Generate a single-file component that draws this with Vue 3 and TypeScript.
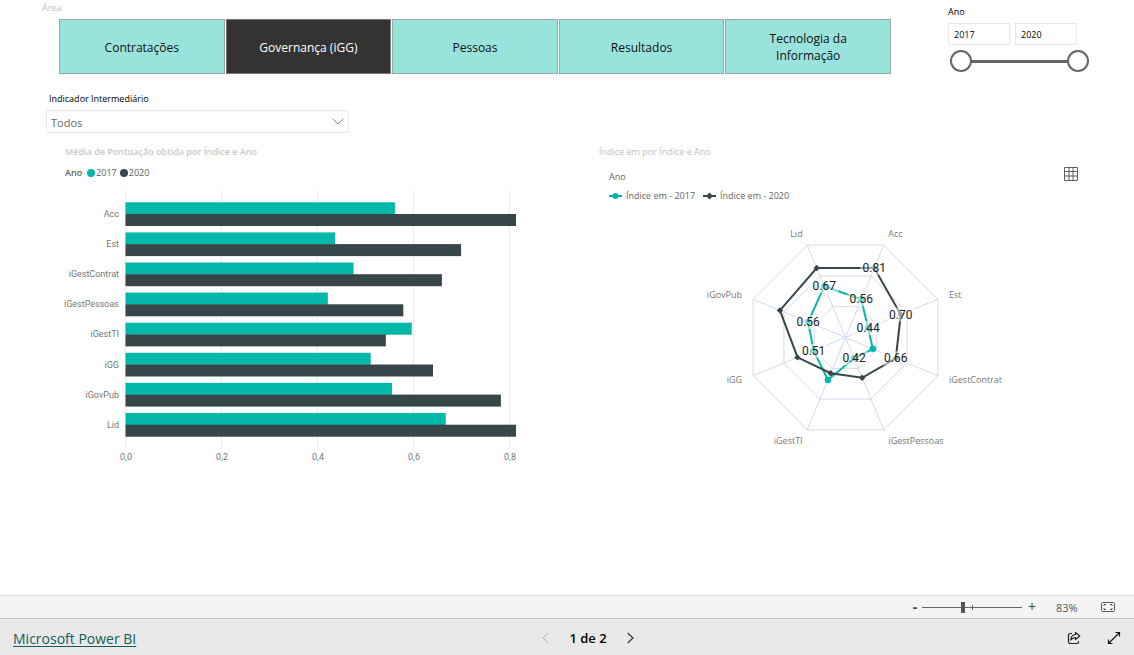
<script setup lang="ts">
import { computed, ref } from 'vue'

interface Indicator {
  name: string
  y2017: number
  y2020: number
}

interface ValueLabel {
  x: number
  y: number
  text: string
}

const areas = ['Contratações', 'Governança (iGG)', 'Pessoas', 'Resultados', 'Tecnologia da Informação']
const selectedArea = ref('Governança (iGG)')
const indicator = ref('Todos')
const yearFrom = ref(2017)
const yearTo = ref(2020)
const zoomLevel = ref(83)

const rows: Indicator[] = [
  { name: 'Acc', y2017: 0.562, y2020: 0.8146 },
  { name: 'Est', y2017: 0.437, y2020: 0.7 },
  { name: 'iGestContrat', y2017: 0.4756, y2020: 0.66 },
  { name: 'iGestPessoas', y2017: 0.422, y2020: 0.5795 },
  { name: 'iGestTI', y2017: 0.597, y2020: 0.543 },
  { name: 'iGG', y2017: 0.5115, y2020: 0.6415 },
  { name: 'iGovPub', y2017: 0.556, y2020: 0.783 },
  { name: 'Lid', y2017: 0.668, y2020: 0.8146 },
]

/* Bar chart scales */
const unit = 479.4
const band = 30.1
const ticks = [0, 0.2, 0.4, 0.6, 0.8].map((v) => ({
  x: Math.round(v * unit),
  label: v.toFixed(1).replace('.', ','),
}))

/* Radar scales */
const radius = 100
const minValue = 0.255
const span = 0.744

function polar(index: number, r: number): [number, number] {
  const angle = ((22.5 + index * 45) * Math.PI) / 180
  return [Math.sin(angle) * r, -Math.cos(angle) * r]
}

function toPoints(list: [number, number][]): string {
  return list.map(([x, y]) => `${x.toFixed(2)},${y.toFixed(2)}`).join(' ')
}

function valuePoint(index: number, value: number): [number, number] {
  return polar(index, ((value - minValue) / span) * radius)
}

const rings = [1 / 3, 2 / 3, 1].map((k) => toPoints(rows.map((_, i) => polar(i, radius * k))))
const spokes = rows.map((_, i) => polar(i, radius))
const points2017 = rows.map((r, i) => valuePoint(i, r.y2017))
const points2020 = rows.map((r, i) => valuePoint(i, r.y2020))

const labelled2017 = [0, 1, 3, 5, 6, 7]
const labelled2020 = [0, 1, 2]
const valueLabels = computed<ValueLabel[]>(() => [
  ...labelled2017.map((i) => ({ x: points2017[i][0], y: points2017[i][1], text: rows[i].y2017.toFixed(2) })),
  ...labelled2020.map((i) => ({ x: points2020[i][0], y: points2020[i][1], text: rows[i].y2020.toFixed(2) })),
])

const axisLabels = rows.map((r, i) => {
  const [x, y] = polar(i, 112)
  return { name: r.name, x, y: y + 3, anchor: x > 0 ? 'start' : 'end' }
})
</script>

<template>
  <div class="page">
    <main class="report">
      <header class="filters">
        <section class="area">
          <h2 class="area-title">Área</h2>
          <div class="tiles">
            <button
              v-for="area in areas"
              :key="area"
              type="button"
              class="tile"
              :class="{ selected: area === selectedArea }"
              :aria-pressed="area === selectedArea"
              @click="selectedArea = area"
            >
              {{ area }}
            </button>
          </div>
        </section>
        <section class="years" aria-labelledby="years-title">
          <h2 id="years-title" class="slicer-title">Ano</h2>
          <div class="year-inputs">
            <input v-model.number="yearFrom" type="text" aria-label="Ano inicial" />
            <input v-model.number="yearTo" type="text" aria-label="Ano final" />
          </div>
          <div class="year-range">
            <input v-model.number="yearFrom" type="range" min="2017" max="2020" aria-label="Início do intervalo" />
            <input v-model.number="yearTo" type="range" min="2017" max="2020" aria-label="Fim do intervalo" />
          </div>
        </section>
      </header>

      <section class="indicator">
        <label class="slicer-title" for="indicator">Indicador Intermediário</label>
        <div class="dropdown">
          <select id="indicator" v-model="indicator">
            <option>Todos</option>
            <option v-for="r in rows" :key="r.name">{{ r.name }}</option>
          </select>
          <svg width="12" height="7" viewBox="0 0 12 7" aria-hidden="true">
            <path d="M.7.7 6 6 11.3.7" fill="none" stroke="#888" />
          </svg>
        </div>
      </section>

      <div class="charts">
        <section class="chart bars">
          <h2 class="chart-title strong">Média de Pontuação obtida por Índice e Ano</h2>
          <div class="legend">
            <strong>Ano</strong>
            <span><i class="dot teal"></i>2017</span>
            <span><i class="dot dark"></i>2020</span>
          </div>
          <svg class="bar-svg" viewBox="0 0 460 280" role="img" aria-label="Média de pontuação por índice e ano">
            <g transform="translate(61 0)">
              <g v-for="t in ticks" :key="t.label">
                <line :x1="t.x - 0.5" :x2="t.x - 0.5" y1="4" y2="262" class="grid" />
                <text :x="t.x" y="274" text-anchor="middle" class="axis narrow">{{ t.label }}</text>
              </g>
              <g v-for="(r, i) in rows" :key="r.name" :transform="`translate(0 ${16 + i * band})`">
                <text x="-7" y="15" text-anchor="end" class="axis narrow">{{ r.name }}</text>
                <rect x="-0.5" y="0.3" height="12" :width="r.y2017 * unit" fill="#01b8aa" />
                <rect x="-0.5" y="12" height="12" :width="r.y2020 * unit" fill="#374649" />
              </g>
            </g>
          </svg>
        </section>

        <section class="chart radar">
          <h2 class="chart-title">Índice em por Índice e Ano</h2>
          <div class="radar-head">
            <div class="radar-legend">
              <span>Ano</span>
              <div class="series">
                <span>
                  <svg width="13" height="8" viewBox="0 0 13 8" aria-hidden="true">
                    <path d="M0 4h13" stroke="#01b8aa" stroke-width="2" />
                    <circle cx="6.5" cy="4" r="3" fill="#01b8aa" />
                  </svg>
                  Índice em - 2017
                </span>
                <span>
                  <svg width="13" height="8" viewBox="0 0 13 8" aria-hidden="true">
                    <path d="M0 4h13" stroke="#374649" stroke-width="2" />
                    <path d="M6.5.5 10 4 6.5 7.5 3 4Z" fill="#374649" />
                  </svg>
                  Índice em - 2020
                </span>
              </div>
            </div>
            <button type="button" class="icon-button" aria-label="Mostrar como tabela">
              <svg width="14" height="14" viewBox="0 0 14 14" fill="none" stroke="#605e5c" aria-hidden="true">
                <path d="M.5.5h13v13H.5zM.5 4.5h13M.5 9h13M5 .5v13M9 .5v13" />
              </svg>
            </button>
          </div>
          <svg class="radar-svg" viewBox="0 0 503 250" role="img" aria-label="Índice por ano em gráfico de radar">
            <g transform="translate(246.5 132.5)">
              <polygon v-for="(p, i) in rings" :key="i" :points="p" class="web" />
              <line v-for="(s, i) in spokes" :key="i" x1="0" y1="0" :x2="s[0]" :y2="s[1]" class="web" />
              <polygon :points="toPoints(points2017)" class="series-line" stroke="#01b8aa" />
              <polygon :points="toPoints(points2020)" class="series-line" stroke="#374649" />
              <circle v-for="(p, i) in points2017" :key="i" :cx="p[0]" :cy="p[1]" r="3.3" fill="#01b8aa" />
              <path
                v-for="(p, i) in points2020"
                :key="i"
                :transform="`translate(${p[0]} ${p[1]})`"
                d="M0-3.2 3.2 0 0 3.2-3.2 0Z"
                fill="#374649"
              />
              <g v-for="(l, i) in valueLabels" :key="i" :transform="`translate(${l.x} ${l.y})`">
                <rect x="-14" y="-7" width="28" height="14" fill="#fff" opacity="0.5" />
                <text x="0" y="4" text-anchor="middle" class="value">{{ l.text }}</text>
              </g>
              <text v-for="a in axisLabels" :key="a.name" :x="a.x" :y="a.y" :text-anchor="a.anchor" class="axis">
                {{ a.name }}
              </text>
            </g>
          </svg>
        </section>
      </div>
    </main>

    <div class="zoom-bar">
      <button type="button" class="zoom-step minus" aria-label="Reduzir">-</button>
      <div class="zoom-range">
        <input v-model.number="zoomLevel" type="range" min="10" max="190" aria-label="Zoom" />
      </div>
      <button type="button" class="zoom-step" aria-label="Ampliar">+</button>
      <output class="zoom-value">{{ zoomLevel }}%</output>
      <button type="button" class="icon-button" aria-label="Ajustar à página">
        <svg width="14" height="10" viewBox="0 0 14 10" fill="none" stroke="#555" aria-hidden="true">
          <rect x=".5" y=".5" width="13" height="9" rx="1" />
          <path d="M3 4V2.500h2M9 2.500h2V4M11 6v1.500H9M5 7.500H3V6" />
        </svg>
      </button>
    </div>

    <footer class="footer">
      <a href="#powerbi">Microsoft Power BI</a>
      <nav class="pager" aria-label="Páginas">
        <button type="button" class="icon-button" aria-label="Página anterior" disabled>
          <svg width="7" height="12" viewBox="0 0 7 12" fill="none" stroke="#b5b5b5" aria-hidden="true">
            <path d="M6.300 1 1 6l5.300 5" />
          </svg>
        </button>
        <span>1 de 2</span>
        <button type="button" class="icon-button" aria-label="Próxima página">
          <svg width="7" height="12" viewBox="0 0 7 12" fill="none" stroke="#333" stroke-width="1.200" aria-hidden="true">
            <path d="M.7 1 6 6 .7 11" />
          </svg>
        </button>
      </nav>
      <div class="actions">
        <button type="button" class="icon-button" aria-label="Compartilhar">
          <svg width="14" height="14" viewBox="0 0 14 14" fill="none" stroke="#222" stroke-width="1.200" stroke-linejoin="round" aria-hidden="true">
            <path d="M5 2.500H3A1.500 1.500 0 0 0 1.500 4v7A1.500 1.500 0 0 0 3 12.500h7a1.500 1.500 0 0 0 1.500-1.500v-1" />
            <path d="M8.500 1.500 12.800 5 8.500 8.500V6.600C6.200 6.500 5 7.300 3.800 9 4 6 5.500 3.700 8.500 3.500Z" />
          </svg>
        </button>
        <button type="button" class="icon-button" aria-label="Tela inteira">
          <svg width="14" height="14" viewBox="0 0 14 14" fill="none" stroke="#111" stroke-width="1.200" aria-hidden="true">
            <path d="M1.500 12.500l11-11M8.500 1.500h4v4M1.500 8.500v4h4" />
          </svg>
        </button>
      </div>
    </footer>
  </div>
</template>

<style>
body {
  margin: 0;
}
</style>

<style scoped>
.page {
  display: flex;
  flex-direction: column;
  min-height: 100vh;
  background: #fff;
  font-family: 'Open Sans', 'Noto Sans', sans-serif;
  color: #000;
}

button,
input,
select {
  font-family: inherit;
}

h2 {
  margin: 0;
  font-weight: 400;
}

.report {
  flex: 1;
}

.filters {
  display: flex;
  height: 91px;
}

.area {
  flex: 1;
  padding-left: 42px;
}

.area-title {
  font-size: 9px;
  line-height: 15px;
  color: #c0c0c0;
}

.tiles {
  display: grid;
  grid-template-columns: repeat(5, 1fr);
  gap: 1px;
  margin: 4px 0 0 17px;
}

.tile {
  height: 55px;
  padding: 1px 32px 0;
  border: 1px solid #99a8a6;
  background: #99e3dd;
  color: #111;
  font-size: 12px;
  line-height: 17px;
}

.tile.selected {
  border-color: #777;
  background: #333;
  color: #fff;
  font-weight: 500;
}

.years {
  width: 141px;
  padding: 4px 45px 0 57px;
}

.slicer-title {
  display: block;
  font-size: 9px;
  line-height: 16px;
}

.year-inputs {
  display: flex;
  gap: 5px;
  margin-top: 3px;
}

.year-inputs input {
  box-sizing: border-box;
  width: 62px;
  height: 22px;
  padding: 0 5px;
  border: 1px solid #eaeaea;
  font-size: 9px;
}

.year-range {
  display: grid;
  align-items: center;
  margin: 5px 0 0 2px;
  background: linear-gradient(#666, #666) center / calc(100% - 22px) 3px no-repeat;
}

.year-range input {
  grid-area: 1 / 1;
  width: 100%;
  height: 22px;
  margin: 0;
  appearance: none;
  background: transparent;
  pointer-events: none;
}

.year-range input::-webkit-slider-thumb {
  box-sizing: border-box;
  width: 22px;
  height: 22px;
  appearance: none;
  border: 2px solid #666;
  border-radius: 50%;
  background: #fff;
  pointer-events: auto;
}

.indicator {
  padding-left: 46px;
}

.indicator .slicer-title {
  padding-left: 3px;
}

.dropdown {
  display: grid;
  align-items: center;
  width: 303px;
  margin-top: 3px;
}

.dropdown select {
  grid-area: 1 / 1;
  height: 23px;
  padding: 2px 4px 0;
  appearance: none;
  border: 1px solid #eaeaea;
  border-radius: 0;
  background: #fff;
  color: #666;
  font-size: 11px;
}

.dropdown svg {
  grid-area: 1 / 1;
  justify-self: end;
  margin-right: 5px;
  pointer-events: none;
}

.charts {
  display: grid;
  grid-template-columns: 1fr 1fr;
  padding-top: 11px;
}

.bars {
  padding: 0 42px 0 65px;
}

.radar {
  padding: 0 32px;
}

.chart-title {
  font-size: 9px;
  line-height: 16px;
  color: #c0c0c0;
}

.chart-title.strong {
  font-weight: 600;
  color: #c8c8c8;
}

.legend {
  display: flex;
  gap: 3px;
  margin-top: 6px;
  font-size: 9px;
  line-height: 14px;
  color: #605e5c;
}

.legend strong {
  margin-right: 2px;
  font-weight: 600;
}

.legend span {
  display: flex;
  align-items: center;
  gap: 1px;
}

.dot {
  width: 8px;
  height: 8px;
  border-radius: 50%;
}

.teal {
  background: #01b8aa;
}

.dark {
  background: #374649;
}

.bar-svg {
  display: block;
  width: 100%;
  margin-top: 6px;
  overflow: visible;
}

.grid {
  stroke: #ebebeb;
}

.axis {
  fill: #777;
  font-size: 9px;
}

.axis.narrow {
  font-family: Roboto, 'Open Sans', sans-serif;
}

.radar-head {
  display: flex;
  justify-content: space-between;
  align-items: flex-start;
  padding: 7px 24px 0 10px;
}

.radar-legend {
  font-size: 9px;
  line-height: 19px;
  color: #666;
}

.series {
  display: flex;
  gap: 8px;
}

.series span {
  display: flex;
  align-items: center;
  gap: 4px;
}

.radar-svg {
  display: block;
  width: 100%;
}

.web {
  fill: none;
  stroke: #d2daee;
}

.series-line {
  fill: none;
  stroke-width: 2;
}

.value {
  fill: #222;
  font-family: Roboto, 'Open Sans', sans-serif;
  font-size: 12px;
}

.icon-button {
  display: flex;
  padding: 0;
  border: 0;
  background: none;
}

.zoom-bar {
  display: flex;
  justify-content: flex-end;
  align-items: center;
  box-sizing: border-box;
  height: 23px;
  padding-right: 19px;
  border-top: 1px solid #dcdcdc;
  background: #f4f4f4;
  color: #555;
}

.zoom-step {
  width: 20px;
  padding: 0;
  border: 0;
  background: none;
  color: #444;
  font-size: 14px;
  line-height: 20px;
}

.zoom-step.minus {
  width: 14px;
  font-weight: 700;
}

.zoom-range {
  display: flex;
  width: 100px;
  background:
    linear-gradient(#666, #666) center / 100% 1px no-repeat,
    linear-gradient(#666, #666) center / 1px 5px no-repeat;
}

.zoom-range input {
  width: 100%;
  height: 12px;
  margin: 0;
  appearance: none;
  background: transparent;
}

.zoom-range input::-webkit-slider-thumb {
  width: 4px;
  height: 11px;
  appearance: none;
  background: #555;
}

.zoom-value {
  width: 46px;
  margin-right: 13px;
  box-sizing: border-box;
  padding-left: 14px;
  font-size: 11px;
}

.footer {
  display: grid;
  grid-template-columns: 1fr auto 1fr;
  align-items: center;
  box-sizing: border-box;
  height: 37px;
  padding: 2px 13px 0;
  border-top: 1px solid #c4c4c4;
  background: #e9e9e9;
}

.footer a {
  color: #11615a;
  font-size: 14px;
  text-underline-offset: 2px;
}

.pager {
  display: flex;
  align-items: center;
  gap: 20px;
  margin-right: -42px;
  font-size: 13px;
  font-weight: 600;
}

.actions {
  display: flex;
  justify-content: flex-end;
  gap: 26px;
}
</style>
